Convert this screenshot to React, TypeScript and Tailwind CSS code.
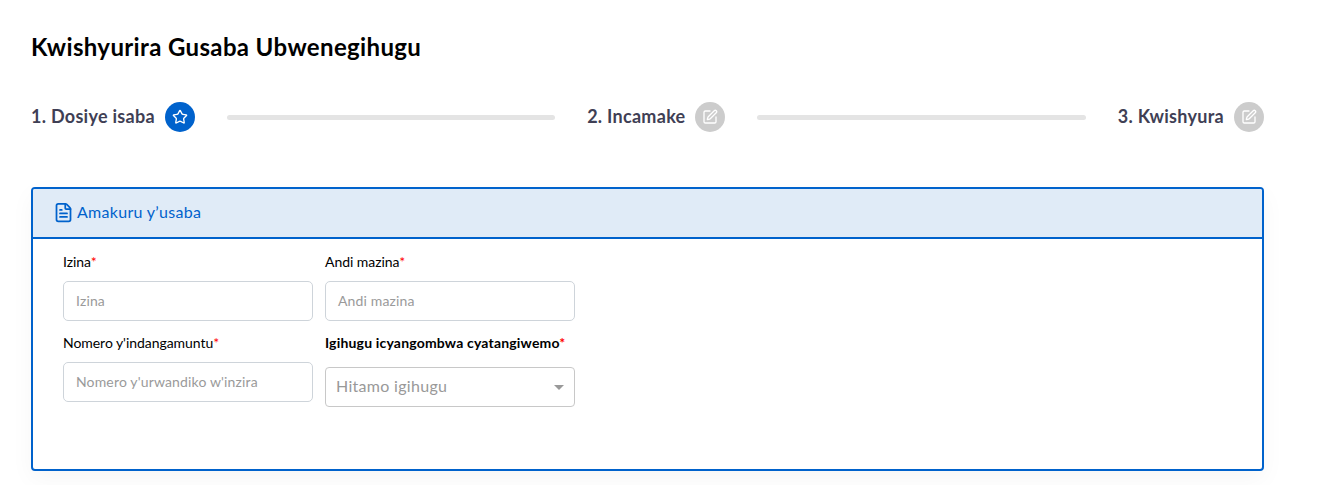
import { Star, SquarePen, FileText } from "lucide-react";

function Step({ label, active }: { label: string; active?: boolean }) {
  return (
    <div className="flex items-center gap-[10px] shrink-0">
      <span className="text-[18px] tracking-[0.28px] font-bold text-[#3f3f55] leading-[30px] -translate-y-px">{label}</span>
      <span className={"w-[30px] h-[30px] rounded-full flex items-center justify-center " + (active ? "bg-[#0062cc]" : "bg-[#cccccc]")}>
        {active ? <Star size={16} color="#fff" strokeWidth={2} /> : <SquarePen size={16} color="#fff" strokeWidth={2} />}
      </span>
    </div>
  );
}

function Line() {
  return <div className="flex-1 h-[5px] mx-8 rounded-full bg-[#e4e4e4]" />;
}

function Field({ label, placeholder }: { label: string; placeholder: string }) {
  return (
    <div className="w-[250px]">
      <div className="text-[14px] leading-[20px] text-black tracking-[-0.05px]">
        {label}<span className="text-[#ff0000]">*</span>
      </div>
      <div className="h-[40px] mt-[9px] border border-[#ced4da] rounded-[5px] bg-white flex items-center pl-3 pb-[2px] text-[14px] tracking-[0.15px] text-[#9a9a9a]">
        {placeholder}
      </div>
    </div>
  );
}

export default function App() {
  return (
    <div className="w-[1318px] h-[485px] bg-white overflow-hidden pl-[31px] pr-[54px] pt-[32px] font-['Lato','Noto_Sans',sans-serif]">
      <h1 className="text-[24px] tracking-[0.36px] font-bold leading-[30px] text-black">Kwishyurira Gusaba Ubwenegihugu</h1>
      <div className="flex items-center mt-[40px]">
        <Step label="1. Dosiye isaba" active />
        <Line />
        <Step label="2. Incamake" />
        <Line />
        <Step label="3. Kwishyura" />
      </div>
      <div className="mt-[55px] h-[284px] border-2 border-[#0062cc] rounded-[4px] shadow-[0_8px_24px_rgba(0,0,0,0.04)] overflow-hidden">
        <div className="h-[50px] bg-[#e0ebf7] border-b-2 border-[#0062cc] flex items-center pl-[20px] gap-[3px] text-[#0062cc] text-[16px] tracking-[0.3px]">
          <FileText size={21} strokeWidth={2} className="-translate-y-px" />
          <span className="-translate-y-px">Amakuru y’usaba</span>
        </div>
        <div className="pl-[30px] pt-[13px]">
          <div className="flex gap-3">
            <Field label="Izina" placeholder="Izina" />
            <Field label="Andi mazina" placeholder="Andi mazina" />
          </div>
          <div className="flex gap-3 mt-[12px]">
            <Field label="Nomero y'indangamuntu" placeholder="Nomero y'urwandiko w'inzira" />
            <div className="w-[250px]">
              <div className="text-[14px] leading-[20px] text-black font-bold tracking-[0.18px] whitespace-nowrap">
                Igihugu icyangombwa cyatangiwemo<span className="text-[#ff0000]">*</span>
              </div>
              <div className="mt-[14px] h-[40px] border border-[#c8c8c8] rounded-[4px] flex items-center justify-between pl-[10px] pr-[10px] text-[16px] tracking-[0.3px] text-[#999999]">
                <span className="-translate-y-px">Hitamo igihugu</span>
                <span className="w-0 h-0 border-x-[5px] border-x-transparent border-t-[5px] border-t-[#999999]" />
              </div>
            </div>
          </div>
        </div>
      </div>
    </div>
  );
}
